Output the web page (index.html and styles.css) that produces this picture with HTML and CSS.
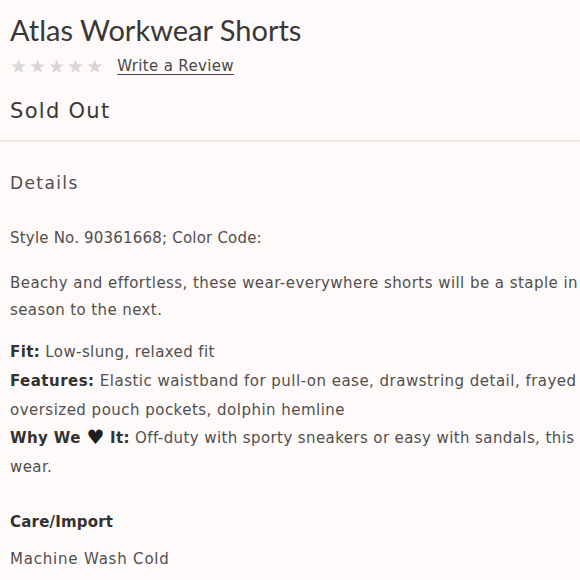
FILE: index.html
```html
<!DOCTYPE html>
<html>
<head>
<meta charset="utf-8">
<link rel="stylesheet" href="styles.css">
</head>
<body>
<main class="product">
  <h1 class="title">Atlas Workwear Shorts</h1>
  <div class="rating">
    <span class="stars">★★★★★</span>
    <a class="review-link" href="#">Write a Review</a>
  </div>
  <p class="price">Sold Out</p>
  <hr class="divider">
  <h2 class="section-title">Details</h2>
  <p class="style-no">Style No. 90361668; Color Code:</p>
  <p class="desc"><span class="line-a">Beachy and effortless, these wear-everywhere shorts will be a staple in</span><br>season to the next.</p>
  <ul class="specs">
    <li class="fit"><b>Fit:</b> Low-slung, relaxed fit</li>
    <li class="features"><b>Features:</b> Elastic waistband for pull-on ease, drawstring detail, frayed<br>oversized pouch pockets, dolphin hemline</li>
    <li class="why"><b>Why We <span class="heart">♥</span> It:</b> Off-duty with sporty sneakers or easy with sandals, this<br>wear.</li>
  </ul>
  <h3 class="care-title">Care/Import</h3>
  <p class="care">Machine Wash Cold</p>
</main>
</body>
</html>
```
FILE: styles.css
```css
html, body {
  margin: 0;
  padding: 0;
  background: #fdfaf9;
}
body {
  width: 580px;
  height: 580px;
  overflow: hidden;
}
.product {
  padding: 0 0 0 10px;
  font-family: "DejaVu Sans", sans-serif;
  font-size: 15px;
  letter-spacing: 0.4px;
  color: #524f4e;
  white-space: nowrap;
}
.title {
  margin: 0;
  padding-top: 12px;
  font-family: "Lato", sans-serif;
  font-weight: 400;
  font-size: 29px;
  line-height: 36px;
  color: #3a3837;
  letter-spacing: 0;
}
.rating {
  display: flex;
  align-items: center;
  gap: 12px;
  margin-top: 7px;
  height: 22px;
}
.stars {
  color: #d9d7d5;
  font-size: 19px;
  line-height: 22px;
  letter-spacing: 2px;
}
.review-link {
  color: #4a4847;
  font-size: 15px;
  letter-spacing: 0.35px;
  text-decoration: underline;
  text-underline-offset: 3px;
  text-decoration-thickness: 1px;
}
.price {
  margin: 21px 0 0;
  font-size: 21px;
  line-height: 26px;
  color: #3a3837;
  letter-spacing: 1.3px;
}
.divider {
  border: 0;
  border-top: 2px solid #efebe9;
  margin: 16px 0 0 -10px;
  width: 590px;
}
.section-title {
  margin: 31px 0 0;
  font-size: 17px;
  font-weight: 400;
  line-height: 20px;
  letter-spacing: 1.4px;
}
.style-no {
  margin: 35px 0 0;
  line-height: 20px;
  letter-spacing: 0.2px;
}
.desc {
  margin: 22px 0 0;
  line-height: 27px;
}
.line-a {
  letter-spacing: 0.45px;
}
.specs {
  list-style: none;
  margin: 14px 0 0;
  padding: 0;
  line-height: 28.75px;
}
.features {
  letter-spacing: 0.48px;
}
.specs b {
  color: #333231;
}
.heart {
  color: #1e1e1e;
  font-size: 20px;
  line-height: 0;
  letter-spacing: 0;
  vertical-align: -1px;
}
.care-title {
  margin: 30px 0 0;
  font-size: 15px;
  font-weight: 700;
  line-height: 20px;
  color: #333231;
  letter-spacing: 0.2px;
}
.care {
  margin: 17px 0 0;
  line-height: 20px;
  letter-spacing: 0.8px;
}
```
